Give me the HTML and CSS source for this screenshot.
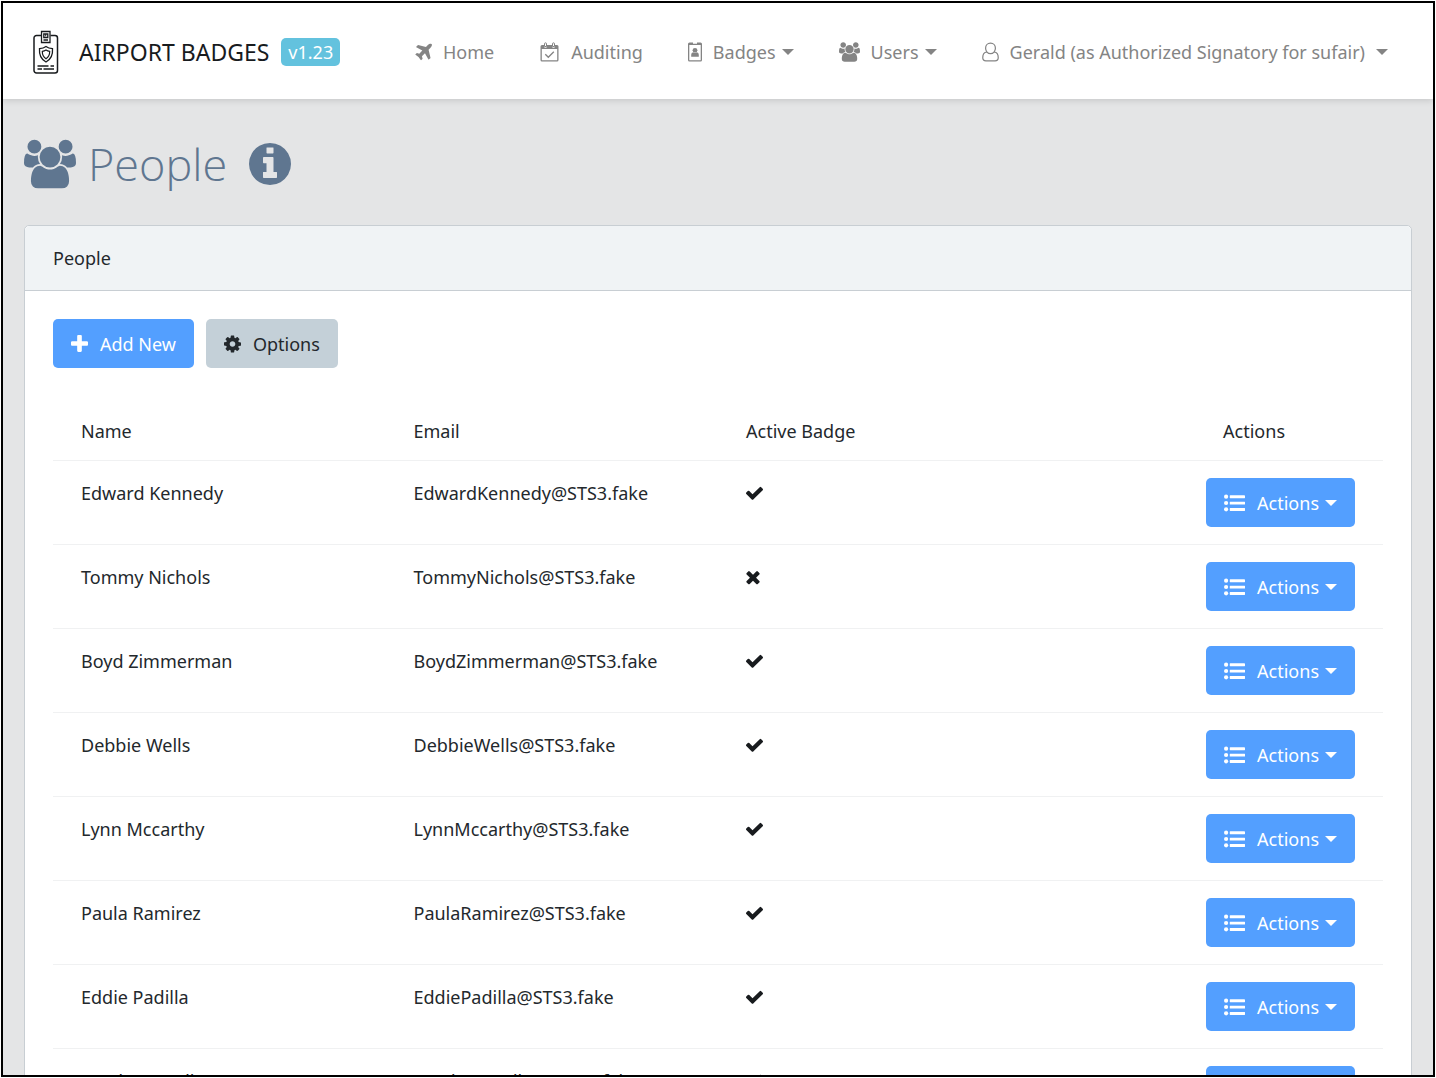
FILE: index.html
```
<!DOCTYPE html>
<html lang="en">

<head>
    <meta charset="UTF-8">
    <meta name="viewport" content="width=device-width, initial-scale=1.0">
    <title>Airport Badges - People</title>
    <link rel="stylesheet" href="styles.css">
</head>

<body>

    <!-- Icon definitions -->
    <svg class="icon-defs" aria-hidden="true">
        <symbol id="icon-plane" viewBox="160 100 1440 1480"><path d="M1568 160q44 52 12 148t-108 172l-161 161 160 696q5 19-12 33l-128 96q-7 6-19 6-4 0-7-1-15-3-21-16l-279-508-259 259 53 194q5 17-8 31l-96 96q-9 9-23 9h-2q-15-2-24-13l-189-252-252-189q-11-7-13-23-1-13 9-25l96-97q9-9 23-9 6 0 8 1l194 53 259-259-508-279q-14-8-17-24-2-16 9-27l128-128q14-13 30-8l665 159 160-160q76-76 172-108t148 12z"/></symbol>
        <symbol id="icon-calendar" viewBox="0 0 20 20"><path fill-rule="evenodd" d="M2.5 3h2v1.200a1.500 1.500 0 0 0 3 0V3h5v1.200a1.500 1.500 0 0 0 3 0V3h2A1.500 1.500 0 0 1 19 4.500v13.500a1.500 1.500 0 0 1-1.500 1.500h-15A1.500 1.500 0 0 1 1 18V4.500A1.500 1.500 0 0 1 2.500 3zM2.300 7v11q0 .3.3.3h14.800q.3 0 .3-.3V7z"/><path fill="none" stroke="currentColor" d="M5 4.500V1.800a1 1 0 0 1 2 0v2.700zM13 4.500V1.800a1 1 0 0 1 2 0v2.700z"/><path fill="none" stroke="currentColor" stroke-width="1.300" d="M5.800 12.300l3 3 5.500-5.500"/></symbol>
        <symbol id="icon-badge" viewBox="0 0 14 20"><path fill-rule="evenodd" d="M1.500.500h3.500v1.200h4V.500h3.500A1.500 1.500 0 0 1 14 2v16a1.500 1.500 0 0 1-1.500 1.500h-11A1.500 1.500 0 0 1 0 18V2A1.500 1.500 0 0 1 1.500.500zM1.300 3v15q0 .3.3.3h10.800q.3 0 .3-.3V3z"/><circle cx="7" cy="8.300" r="2.400"/><path d="M3.200 14.800v-2q0-2.500 2-2.500 1.800 1.300 3.600 0 2 0 2 2.500v2z"/></symbol>
        <symbol id="icon-users" viewBox="0 0 1920 1792"><path d="M593 896q-162 5-265 128h-134q-82 0-138-40.500t-56-118.500q0-353 124-353 6 0 43.500 21t97.500 42.500 119 21.500q67 0 133-23-5 37-5 66 0 139 81 256zm1071 637q0 120-73 189.500t-194 69.500h-874q-121 0-194-69.500t-73-189.500q0-53 3.500-103.500t14-109 26.500-108.500 43-97.500 62-81 85.500-53.500 111.500-20q10 0 43 21.500t73 48 107 48 135 21.500 135-21.500 107-48 73-48 43-21.500q61 0 111.500 20t85.500 53.500 62 81 43 97.500 26.500 108.500 14 109 3.500 103.500zm-1024-1277q0 106-75 181t-181 75-181-75-75-181 75-181 181-75 181 75 75 181zm704 384q0 159-112.500 271.500t-271.500 112.500-271.500-112.500-112.500-271.500 112.500-271.500 271.500-112.500 271.500 112.500 112.500 271.500zm576 225q0 78-56 118.500t-138 40.500h-134q-103-123-265-128 81-117 81-256 0-29-5-66 66 23 133 23 59 0 119-21.500t97.500-42.500 43.500-21q124 0 124 353zm-128-609q0 106-75 181t-181 75-181-75-75-181 75-181 181-75 181 75 75 181z"/></symbol>
        <symbol id="icon-user" viewBox="0 1 18 20"><path fill="none" stroke="currentColor" stroke-width="1.300" d="M9 1.700c3.200 0 5.200 2.400 5.200 5.400S12 12.800 9 12.800 3.800 10.100 3.800 7.100 5.800 1.700 9 1.700zM5 11c-2.800.2-4.200 2.600-4.200 6.200 0 2.200 1.200 3.200 3.400 3.200h9.600c2.200 0 3.400-1 3.400-3.200 0-3.600-1.400-6-4.200-6.200"/></symbol>
        <symbol id="icon-info" viewBox="128 128 1536 1536"><path d="M1152 1376v-160q0-14-9-23t-23-9h-96v-512q0-14-9-23t-23-9h-320q-14 0-23 9t-9 23v160q0 14 9 23t23 9h96v320h-96q-14 0-23 9t-9 23v160q0 14 9 23t23 9h448q14 0 23-9t9-23zm-128-896v-160q0-14-9-23t-23-9h-192q-14 0-23 9t-9 23v160q0 14 9 23t23 9h192q14 0 23-9t9-23zm640 416q0 209-103 385.500t-279.500 279.500-385.500 103-385.500-103-279.500-279.500-103-385.500 103-385.500 279.500-279.500 385.500-103 385.500 103 279.500 279.500 103 385.500z"/></symbol>
        <symbol id="icon-plus" viewBox="192 128 1408 1500"><path d="M1600 736v192q0 40-28 68t-68 28h-416v416q0 40-28 68t-68 28h-192q-40 0-68-28t-28-68v-416h-416q-40 0-68-28t-28-68v-192q0-40 28-68t68-28h416v-416q0-40 28-68t68-28h192q40 0 68 28t28 68v416h416q40 0 68 28t28 68z"/></symbol>
        <symbol id="icon-cog" viewBox="128 128 1536 1536"><path d="M1152 896q0-106-75-181t-181-75-181 75-75 181 75 181 181 75 181-75 75-181zm512-109v222q0 12-8 23t-20 13l-185 28q-19 54-39 91 35 50 107 138 10 12 10 25t-9 23q-27 37-99 108t-94 71q-12 0-26-9l-138-108q-44 23-91 38-16 136-29 186-7 28-36 28h-222q-14 0-24.500-8.500t-11.500-21.500l-28-184q-49-16-90-37l-141 107q-10 9-25 9-14 0-25-11-126-114-165-168-7-10-7-23 0-12 8-23 15-21 51-66.500t54-70.500q-27-50-41-99l-183-27q-13-2-21-12.500t-8-23.500v-222q0-12 8-23t19-13l186-28q14-46 39-92-40-57-107-138-10-12-10-24 0-10 9-23 26-36 98.500-107.500t94.500-71.500q13 0 26 10l138 107q44-23 91-38 16-136 29-186 7-28 36-28h222q14 0 24.500 8.500t11.500 21.500l28 184q49 16 90 37l142-107q9-9 24-9 13 0 25 10 129 119 165 170 7 8 7 22 0 12-8 23-15 21-51 66.500t-54 70.500q26 50 41 98l183 28q13 2 21 12.500t8 23.500z"/></symbol>
        <symbol id="icon-check" viewBox="121 0 1550 1792"><path d="M1671 566q0 40-28 68l-724 724-136 136q-28 28-68 28t-68-28l-136-136-362-362q-28-28-28-68t28-68l136-136q28-28 68-28t68 28l294 295 656-657q28-28 68-28t68 28l136 136q28 28 28 68z"/></symbol>
        <symbol id="icon-times" viewBox="302 0 1188 1792"><path d="M1490 1322q0 40-28 68l-136 136q-28 28-68 28t-68-28l-294-294-294 294q-28 28-68 28t-68-28l-136-136q-28-28-28-68t28-68l294-294-294-294q-28-28-28-68t28-68l136-136q28-28 68-28t68 28l294 294 294-294q28-28 68-28t68 28l136 136q28 28 28 68t-28 68l-294 294 294 294q28 28 28 68z"/></symbol>
        <symbol id="icon-list" viewBox="0 0 20 16"><circle cx="2" cy="2" r="2"/><circle cx="2" cy="8" r="2"/><circle cx="2" cy="14" r="2"/><rect x="5.500" y=".700" width="14.500" height="2.800" rx=".4"/><rect x="5.500" y="6.700" width="14.500" height="2.800" rx=".4"/><rect x="5.500" y="12.700" width="14.500" height="2.800" rx=".4"/></symbol>
    </svg>

    <div class="window">

        <!-- Top Navigation -->
        <header class="navbar">
            <a class="brand" href="#">
                <svg class="brand-logo" viewBox="0 0 26 44" fill="none" stroke="currentColor" aria-hidden="true">
                    <path stroke-width="1.500" d="M8 5.500H3.500a2.500 2.500 0 0 0-2.500 2.500v32.500a2.500 2.500 0 0 0 2.500 2.500h18.500a2.500 2.500 0 0 0 2.500-2.500V8a2.500 2.500 0 0 0-2.500-2.500H17.500"/>
                    <path stroke-width="1.300" d="M8.500 1.500h8.500v11H8.500zM10.800 4h4v3.500h-4zM10.500 10h4.500M12.200 5.500h1"/>
                    <path stroke-width="1.300" d="M13 16.500c2 1.500 4 2 6.500 2.200.5 6-1.500 10.500-6.500 13.300-5-2.800-7-7.300-6.500-13.300 2.500-.2 4.500-.7 6.500-2.200z"/>
                    <path stroke-width="1.200" d="M13 20c1.200.8 2.400 1.200 3.700 1.400 0 3.400-1.200 5.600-3.700 7.400-2.500-1.800-3.700-4-3.700-7.400 1.300-.2 2.500-.6 3.700-1.400z"/>
                    <path stroke-width="1.300" d="M4.500 36h11M17.500 36h3.500M4.500 39h4.500M10.500 39h10.500"/>
                </svg>
                <span class="brand-name">AIRPORT BADGES</span>
                <span class="version">v1.23</span>
            </a>
            <nav class="nav">
                <a class="nav-link" href="#"><svg class="icon icon-md"><use href="#icon-plane"/></svg>Home</a>
                <a class="nav-link" href="#"><svg class="icon icon-lg"><use href="#icon-calendar"/></svg>Auditing</a>
                <a class="nav-link" href="#"><svg class="icon icon-sm"><use href="#icon-badge"/></svg>Badges<span class="caret"></span></a>
                <a class="nav-link" href="#"><svg class="icon icon-lg"><use href="#icon-users"/></svg>Users<span class="caret"></span></a>
                <a class="nav-link nav-user" href="#"><svg class="icon icon-md"><use href="#icon-user"/></svg>Gerald (as Authorized Signatory for sufair)<span class="caret"></span></a>
            </nav>
        </header>

        <!-- Page Content -->
        <main class="content">
            <h1 class="page-title">
                <svg class="title-icon"><use href="#icon-users"/></svg>
                <span>People</span>
                <svg class="info-icon"><use href="#icon-info"/></svg>
            </h1>

            <section class="card">
                <div class="card-header">People</div>
                <div class="card-body">
                    <div class="toolbar">
                        <button type="button" class="btn btn-primary"><svg class="icon icon-md"><use href="#icon-plus"/></svg>Add New</button>
                        <button type="button" class="btn btn-secondary"><svg class="icon icon-md"><use href="#icon-cog"/></svg>Options</button>
                    </div>

                    <table class="people">
                        <thead>
                            <tr>
                                <th>Name</th>
                                <th>Email</th>
                                <th>Active Badge</th>
                                <th class="actions">Actions</th>
                            </tr>
                        </thead>
                        <tbody id="peopleRows"></tbody>
                    </table>
                </div>
            </section>
        </main>
    </div>

    <script src="people.js"></script>

</body>
</html>
```
FILE: styles.css
```
* {
    box-sizing: border-box;
}

body {
    margin: 0;
    padding: 1px;
    background: #fff;
    color: #23282c;
    font-family: "Noto Sans", "Open Sans", sans-serif;
    font-size: 18px;
    line-height: 30px;
}

a {
    color: inherit;
    text-decoration: none;
}

.icon-defs {
    position: absolute;
    width: 0;
    height: 0;
}

.icon,
.title-icon,
.info-icon {
    fill: currentColor;
    flex: none;
}

.icon {
    height: 20px;
}

.icon-sm {
    width: 14px;
}

.icon-md {
    width: 17px;
}

.icon-lg {
    width: 21px;
}

.window {
    height: calc(100vh - 2px);
    overflow: hidden;
    border: 2px solid #000;
    background: #e4e5e6;
}

/* Navbar */
.navbar {
    display: flex;
    align-items: center;
    justify-content: space-between;
    height: 96px;
    padding: 2px 45px 0 30px;
    background: #fff;
    box-shadow: 0 2px 6px rgba(0, 0, 0, 0.12);
}

.brand {
    display: flex;
    align-items: center;
    color: #181b1e;
    font-size: 23px;
}

.brand-logo {
    width: 26px;
    height: 44px;
    margin-right: 20px;
}

.version {
    margin-left: 12px;
    padding: 0 7px;
    border-radius: 5px;
    background: #63c2de;
    color: #fff;
    font-size: 18px;
    line-height: 28px;
}

.nav {
    display: flex;
    align-items: center;
    gap: 45px;
    color: #848484;
}

.nav-link {
    display: flex;
    align-items: center;
}

.nav-link .icon {
    margin-right: 11px;
}

.caret {
    width: 0;
    margin-left: 6px;
    border: 6px solid transparent;
    border-top-color: currentColor;
    border-bottom: 0;
}

.nav-user .caret {
    margin-left: 11px;
}

/* Page title */
.content {
    padding: 25px 21px;
}

.page-title {
    display: flex;
    align-items: center;
    margin: 0 0 21px;
    color: #5f7690;
    font-family: "Open Sans", "Noto Sans", sans-serif;
    font-size: 45px;
    font-weight: 300;
    line-height: 80px;
}

.title-icon {
    width: 52px;
    height: 50px;
    margin-right: 12px;
}

.info-icon {
    width: 42px;
    height: 42px;
    margin-left: 22px;
}

/* Card */
.card {
    border: 1px solid #c8ced3;
    border-radius: 5px;
    background: #fff;
}

.card-header {
    padding: 17px 28px;
    border-bottom: 1px solid #c8ced3;
    border-radius: 5px 5px 0 0;
    background: #f0f3f5;
}

.card-body {
    padding: 28px;
}

.toolbar {
    display: flex;
    gap: 12px;
    margin-bottom: 34px;
}

/* Buttons */
.btn {
    display: inline-flex;
    align-items: center;
    height: 49px;
    padding: 0 18px;
    border: 0;
    border-radius: 5px;
    font: inherit;
    cursor: pointer;
}

.btn .icon {
    margin-right: 12px;
}

.btn-primary {
    background: #539fff;
    color: #fff;
}

.btn-secondary {
    background: #c4d0d8;
    color: #23282c;
}

/* People table */
.people {
    width: 100%;
    border-collapse: collapse;
    table-layout: fixed;
}

.people th,
.people td {
    height: 84px;
    padding: 17px 28px;
    border-bottom: 1px solid #f0f1f2;
    font-weight: 400;
    text-align: left;
    vertical-align: top;
}

.people th {
    height: auto;
    padding-top: 14px;
    padding-bottom: 14px;
}

.people .actions {
    text-align: right;
}

.people th.actions {
    padding-right: 98px;
}

.people td .icon {
    display: block;
    margin-top: 5px;
}

.people .mark {
    color: #181b1e;
}

.people .btn .icon {
    margin-top: 0;
}
```
FILE: people.js
```
const people = [
    { name: 'Edward Kennedy', active: true },
    { name: 'Tommy Nichols', active: false },
    { name: 'Boyd Zimmerman', active: true },
    { name: 'Debbie Wells', active: true },
    { name: 'Lynn Mccarthy', active: true },
    { name: 'Paula Ramirez', active: true },
    { name: 'Eddie Padilla', active: true },
    { name: 'Gordon Bradley', active: true }
];

// Build one table row per person
document.getElementById('peopleRows').innerHTML = people.map(person => `
    <tr>
        <td>${person.name}</td>
        <td>${person.name.replace(' ', '')}@STS3.fake</td>
        <td class="mark"><svg class="icon ${person.active ? 'icon-md' : 'icon-sm'}"><use href="#icon-${person.active ? 'check' : 'times'}"/></svg></td>
        <td class="actions"><button type="button" class="btn btn-primary"><svg class="icon icon-lg"><use href="#icon-list"/></svg>Actions<span class="caret"></span></button></td>
    </tr>`).join('');
```
